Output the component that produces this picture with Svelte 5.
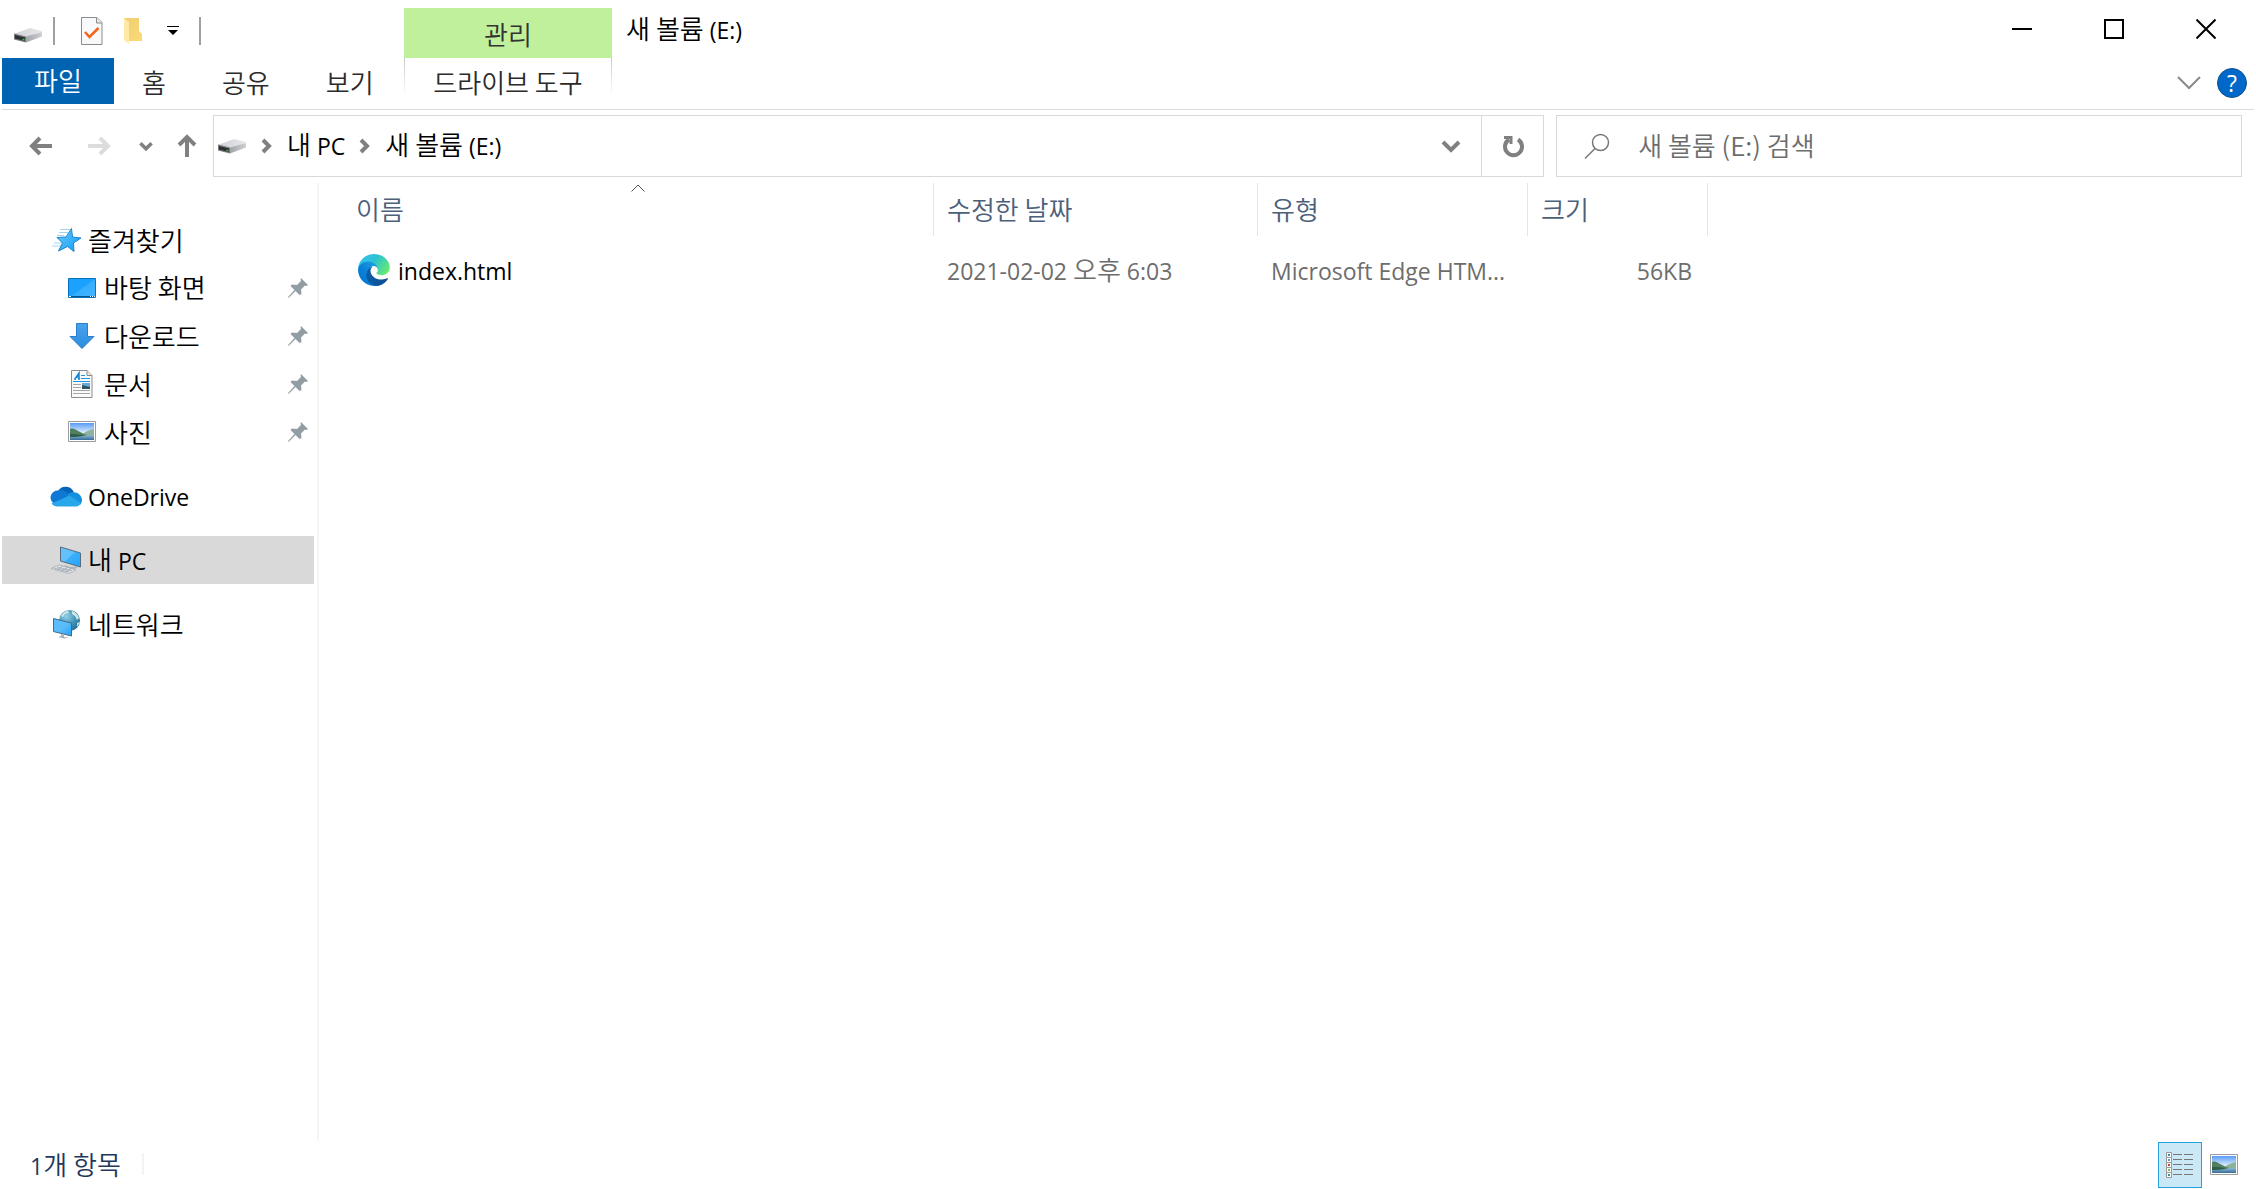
<script lang="ts">
  interface Place {
    label: string;
    icon: string;
    child?: boolean;
    group?: boolean;
    active?: boolean;
  }

  const places: Place[] = [
    {label: '즐겨찾기', icon: 'star'},
    {label: '바탕 화면', icon: 'desktop', child: true},
    {label: '다운로드', icon: 'download', child: true},
    {label: '문서', icon: 'document', child: true},
    {label: '사진', icon: 'picture', child: true},
    {label: 'OneDrive', icon: 'cloud', group: true},
    {label: '내 PC', icon: 'pc', group: true, active: true},
    {label: '네트워크', icon: 'network', group: true},
  ];
  const tabs = ['홈', '공유', '보기'];
  const crumbs = ['내 PC', '새 볼륨 (E:)'];
  const columns = ['이름', '수정한 날짜', '유형', '크기'];
  const files = [
    {name: 'index.html', date: '2021-02-02 오후 6:03', type: 'Microsoft Edge HTM...', size: '56KB'},
  ];
  const viewRows = [0, 5, 10, 15, 20];
  const viewColors = ['#3b8ea5', '#6c8fc7', '#d5402b', '#8fae4a', '#3b8e8e'];

  let search = $state('');
  let view = $state('details');

  // Hangul and Latin runs are set in different faces.
  const runs = (text: string) => text.match(/[\x20-\x7e]+|[^\x20-\x7e]+/g) ?? [];
</script>

{#snippet mixed(text: string)}
  <span class="mixed">{#each runs(text) as run}<span class:latin={/^[\x20-\x7e]/.test(run)}>{run}</span>{/each}</span>
{/snippet}

{#snippet drive()}
  <svg width="30" height="18" viewBox="0 0 30 18" aria-hidden="true">
    <defs>
      <linearGradient id="drive-top" x1="0" x2="1"><stop offset="0" stop-color="#cfd0d3" /><stop offset="1" stop-color="#e8e9ec" /></linearGradient>
      <linearGradient id="drive-side" x1="0" x2="1"><stop offset="0" stop-color="#a3a4a7" /><stop offset="1" stop-color="#cfd0d3" /></linearGradient>
    </defs>
    <path d="M1 8 17 2l12 3v1L13 11z" fill="url(#drive-top)" />
    <path d="M13 10.500 29 6v4.500L13 16.500z" fill="url(#drive-side)" />
    <path d="M1 7.500 13 10.500v6L1 13.500z" fill="#77797c" />
    <path d="M2 9 12 11.500v3.500L2 12.500z" fill="#2d2f31" />
    <path d="M9.500 12.500l2 .5v1.500l-2-.5z" fill="#35c83c" />
  </svg>
{/snippet}

{#snippet chevron(width: number, color: string, stroke: number)}
  <svg {width} height={width} viewBox="0 0 20 20" fill="none" stroke={color} stroke-width={stroke} aria-hidden="true">
    <path d="M2 6l8 8 8-8" />
  </svg>
{/snippet}

{#snippet crumbArrow()}
  <svg width="12" height="16" viewBox="0 0 12 16" fill="none" stroke="#808080" stroke-width="4" aria-hidden="true">
    <path d="M2 2l6 6-6 6" />
  </svg>
{/snippet}

{#snippet landscape()}
  <svg width="28" height="22" viewBox="0 0 28 22" aria-hidden="true">
    <defs>
      <linearGradient id="sky" x2="0" y2="1"><stop offset="0" stop-color="#5a9bf5" /><stop offset=".6" stop-color="#e3f2fc" /></linearGradient>
      <linearGradient id="lake" x2="0" y2="1"><stop offset="0" stop-color="#8db9d6" /><stop offset="1" stop-color="#376b95" /></linearGradient>
    </defs>
    <path d="M.5.5h27v20H.500z" fill="#fff" stroke="#9b9b9b" />
    <path d="M2 2h24v17H2z" fill="url(#sky)" />
    <path d="M2 14h24v5H2z" fill="url(#lake)" />
    <path d="M15 13c3-3 7-4 11-5v6H13z" fill="#8cb29c" />
    <path d="M2 8c3-1 5 0 8 2 3 1 5 3 9 4-5 2-11 1-17 2z" fill="#4f7f5d" />
    <path d="M2 13c5 0 9 0 14 1.500C11 16 6 16 2 16z" fill="#2e5d4a" />
  </svg>
{/snippet}

{#snippet placeIcon(name: string)}
  {#if name === 'star'}
    <svg width="32" height="28" viewBox="0 0 32 28" aria-hidden="true">
      <defs><linearGradient id="star-fill" x2="1" y2="1"><stop offset="0" stop-color="#6bcbff" /><stop offset="1" stop-color="#129bf5" /></linearGradient></defs>
      <path d="M10 3.500h11M9 6.500h9M4 17h9M2 20h10M7 9.500h7" stroke="#a5d3ef" />
      <path d="M21.500 2.500l1 8.500 8.500 1-7.500 5 .5 8.500-6.500-5-9 4.500 4-8L7 11.500l9-.5z" fill="url(#star-fill)" stroke="#1b86cd" />
    </svg>
  {:else if name === 'desktop'}
    <svg width="28" height="20" viewBox="0 0 28 20" aria-hidden="true">
      <defs><linearGradient id="desk-fill" x2="1" y2="1"><stop offset=".5" stop-color="#1ba1ff" /><stop offset=".52" stop-color="#35adff" /><stop offset="1" stop-color="#45b5ff" /></linearGradient></defs>
      <path d="M.5.5h27v19H.500z" fill="url(#desk-fill)" stroke="#0872bd" />
      <path d="M1 18.500h26" stroke="#07558d" />
      <path d="M1 18.500h2m19 0h1m1 0h1m1 0h1" stroke="#fff" />
    </svg>
  {:else if name === 'download'}
    <svg width="28" height="28" viewBox="0 0 28 28" aria-hidden="true">
      <defs><linearGradient id="down-fill" x2="0" y2="1"><stop offset="0" stop-color="#4aa3ec" /><stop offset="1" stop-color="#2a8de0" /></linearGradient></defs>
      <path d="M8.500 1.500h11v13h6.500L14 26.500 2 14.500h6.500z" fill="url(#down-fill)" stroke="#2b7fc9" />
    </svg>
  {:else if name === 'document'}
    <svg width="22" height="28" viewBox="0 0 22 28" aria-hidden="true">
      <path d="M.5.5H16l5 5v22H.500z" fill="#fafafa" stroke="#8c8c8c" />
      <path d="M16 .5v5h5" fill="#e3e3e3" stroke="#8c8c8c" />
      <path d="M4 9l4-6v6M5.500 7H8M3 9h2m2 0h2" fill="none" stroke="#1786d1" stroke-width="1.500" />
      <path d="M10 5.500h4M10 8.500h9M2 11.500h17" stroke="#1c94e0" />
      <path d="M2 14.500h8M2 17.500h8M2 20.500h17M2 23.500h17" stroke="#a5a5a5" />
      <path d="M11 13h8v6h-8z" fill="#6ea6d5" /><path d="M11 15l4 1 4 1v2h-8z" fill="#2f5560" />
    </svg>
  {:else if name === 'picture'}
    {@render landscape()}
  {:else if name === 'cloud'}
    <svg width="32" height="22" viewBox="0 0 32 22" aria-hidden="true">
      <path d="M8 6a9 9 0 0 1 16 1.500L18 13z" fill="#0364b8" />
      <path d="M8 5.500c3-1 6 0 8 1.500l6 4L5 19A7 7 0 0 1 8 5.500z" fill="#0f78d4" />
      <path d="M18 9c3-2 5-2 7-1.500 5 .5 7 5 7 7.500 0 2-1 4-2 5L18 12z" fill="#1490df" />
      <path d="M19.500 10.500 31 18c-1 2-3 3.500-5 3.500H7c-2 0-4-1-5.500-3z" fill="#28a8ea" />
    </svg>
  {:else if name === 'pc'}
    <svg width="32" height="28" viewBox="0 0 32 28" aria-hidden="true">
      <defs><linearGradient id="pc-fill" x2="1" y2="1"><stop offset=".45" stop-color="#62c1fb" /><stop offset=".5" stop-color="#39b0fb" /><stop offset="1" stop-color="#27a4f7" /></linearGradient></defs>
      <path d="M10.500 1l20 6v14l-20-6z" fill="url(#pc-fill)" stroke="#576b7c" />
      <path d="M15 19.500l5 2 7-.5-3 2-8-1.500z" fill="#bac2ca" stroke="#8d98a3" stroke-width=".5" />
      <path d="M1 22.500l8-3.500 17 5-7 3.500z" fill="#e4e7ea" stroke="#9da5ad" stroke-width=".7" />
      <path d="M4 22l15 4M7 21l15 4M7 24l6-4M11 25l6-3M15 26l6-3" stroke="#9ba4ad" stroke-width=".8" />
    </svg>
  {:else}
    <svg width="28" height="30" viewBox="0 0 28 30" aria-hidden="true">
      <defs>
        <radialGradient id="globe" cx=".35" cy=".3" r=".8"><stop offset="0" stop-color="#8fd0e8" /><stop offset=".6" stop-color="#3f8eb3" /><stop offset="1" stop-color="#276b90" /></radialGradient>
        <linearGradient id="net-fill" x2="1" y2="1"><stop offset=".5" stop-color="#5bbdfb" /><stop offset="1" stop-color="#24a3f7" /></linearGradient>
      </defs>
      <circle cx="17.500" cy="11.500" r="10.500" fill="url(#globe)" />
      <path d="M9 7c2-3 4-5 7-5l1 2-4 1-2 3zM20 2c4 1 6 4 7 7l-2 2-2-4-3-2zM25 14l3-1-3 5z" fill="#cfe5df" />
      <path d="M1.500 9.500l18 4.500v13l-18-4.500z" fill="url(#net-fill)" stroke="#456985" />
      <path d="M9 25l3 1v2l5 .5-5 1-6-1.500 3-1z" fill="#aab3bd" />
    </svg>
  {/if}
{/snippet}

<div class="window">
  <header class="titlebar">
    <div class="quick">
      <span class="quick-drive">{@render drive()}</span>
      <i class="bar"></i>
      <button class="quick-check" aria-label="속성">
        <svg width="22" height="28" viewBox="0 0 22 28">
          <path d="M.5.5H16l5 5v22H.500z" fill="#f8f9fb" stroke="#8a8a8a" />
          <path d="M15.500.5v5.500H21" fill="#e8e8e8" stroke="#8a8a8a" />
          <path d="M4 15l4.500 5L17.500 11" fill="none" stroke="#f26418" stroke-width="2.500" />
        </svg>
      </button>
      <button class="quick-folder" aria-label="새 폴더">
        <svg width="20" height="28" viewBox="0 0 20 28">
          <defs><linearGradient id="folder" x2="1" y2="1"><stop offset="0" stop-color="#f0cf74" /><stop offset="1" stop-color="#fbd976" /></linearGradient></defs>
          <path d="M1 1h15v13l3 3v7H2z" fill="url(#folder)" />
          <path d="M1 1l5 4v22l-5-4z" fill="#ffe9a6" />
        </svg>
      </button>
      <button class="quick-more" aria-label="빠른 실행 도구 모음 사용자 지정">
        <svg width="12" height="10" viewBox="0 0 12 10"><path d="M0 0h12v1H0zM1 4h10L6 9z" /></svg>
      </button>
      <i class="bar"></i>
    </div>
    <div class="context-title">관리</div>
    <h1>{@render mixed('새 볼륨 (E:)')}</h1>
    <div class="controls">
      <button aria-label="최소화"><svg width="20" height="20" viewBox="0 0 20 20"><path d="M0 10h20" /></svg></button>
      <button aria-label="최대화"><svg width="20" height="20" viewBox="0 0 20 20"><path d="M1 1h18v18H1z" /></svg></button>
      <button aria-label="닫기"><svg width="20" height="20" viewBox="0 0 20 20"><path d="M.5.5l19 19M19.500.5l-19 19" /></svg></button>
    </div>
  </header>

  <nav class="ribbon" aria-label="리본">
    <div class="tabs">
      <button class="file">파일</button>
      {#each tabs as tab}
        <button>{tab}</button>
      {/each}
    </div>
    <button class="context-tab">드라이브 도구</button>
    <div class="ribbon-end">
      <button aria-label="리본 확장">
        <svg width="24" height="14" viewBox="0 0 24 14" fill="none" stroke="#8a8a8a" stroke-width="2"><path d="M1 1l11 11L23 1" /></svg>
      </button>
      <button class="help" aria-label="도움말">?</button>
    </div>
  </nav>

  <div class="toolbar">
    <div class="history">
      <button aria-label="뒤로">
        <svg width="24" height="20" viewBox="0 0 24 20" fill="none" stroke="#808080" stroke-width="4"><path d="M23 10H4M11 2l-8 8 8 8" /></svg>
      </button>
      <button aria-label="앞으로">
        <svg width="24" height="20" viewBox="0 0 24 20" fill="none" stroke="#dcdcdc" stroke-width="4"><path d="M1 10h19M13 2l8 8-8 8" /></svg>
      </button>
      <button aria-label="최근 위치">{@render chevron(14, '#808080', 5)}</button>
      <button aria-label="위로">
        <svg width="20" height="24" viewBox="0 0 20 24" fill="none" stroke="#808080" stroke-width="4"><path d="M10 23V4M2 11l8-8 8 8" /></svg>
      </button>
    </div>
    <div class="address">
      {@render drive()}
      {#each crumbs as crumb}
        {@render crumbArrow()}
        <a href="#top">{@render mixed(crumb)}</a>
      {/each}
      <button class="drop" aria-label="이전 위치">{@render chevron(20, '#808080', 4)}</button>
      <button class="refresh" aria-label="새로 고침">
        <svg width="22" height="24" viewBox="0 0 22 24" fill="none" stroke="#808080" stroke-width="4">
          <path d="M16 5.500a8.500 8.500 0 1 1-9 0" /><path d="M2 3.500h7V10" stroke-width="3" />
        </svg>
      </button>
    </div>
    <label class="search">
      <svg width="26" height="26" viewBox="0 0 26 26" fill="none" stroke="#777" stroke-width="1.500" aria-hidden="true">
        <circle cx="16.500" cy="9.500" r="8" /><path d="M11 15.500L1 25.500" />
      </svg>
      <input type="text" aria-label="검색" placeholder="새 볼륨 (E:) 검색" bind:value={search} />
    </label>
  </div>

  <div class="body">
    <nav class="sidebar" aria-label="탐색">
      {#each places as place}
        <a href="#top" class:child={place.child} class:group={place.group} class:active={place.active}>
          <span class="icon">{@render placeIcon(place.icon)}</span>
          {@render mixed(place.label)}
          {#if place.child}
            <svg class="pin" width="20" height="20" viewBox="0 0 20 20" aria-hidden="true">
              <path d="M13 0l7 7-1.500 1-1.500-.5-4 4 .5 4.500-2 1-4-4L1 19.500 0 20l.5-1.500L6.500 12l-4-4L4 6.500l5 .5 4-4-.5-2z" fill="#929da3" />
            </svg>
          {/if}
        </a>
      {/each}
    </nav>

    <main>
      <table>
        <colgroup><col class="c-name" /><col class="c-date" /><col class="c-type" /><col class="c-size" /></colgroup>
        <thead>
          <tr>
            {#each columns as column, i}
              <th scope="col">
                {column}
                {#if i === 0}
                  <svg class="sort" width="14" height="8" viewBox="0 0 14 8" fill="none" stroke="#555" aria-hidden="true"><path d="M.5 7.500L7 1l6.500 6.500" /></svg>
                {/if}
              </th>
            {/each}
          </tr>
        </thead>
        <tbody>
          {#each files as file}
            <tr>
              <td>
                <a class="name" href="#top">
                  <svg width="32" height="32" viewBox="0 0 258 258" aria-hidden="true">
                    <defs>
                      <linearGradient id="edge-a" x1=".3" x2="1" y1=".6" y2=".6"><stop offset="0" stop-color="#0c59a4" /><stop offset="1" stop-color="#114a8b" /></linearGradient>
                      <linearGradient id="edge-b" x1=".9" x2=".3" y1=".2" y2="1"><stop offset="0" stop-color="#1b9de2" /><stop offset=".5" stop-color="#0b81d8" /><stop offset="1" stop-color="#0078d4" /></linearGradient>
                      <linearGradient id="edge-c" x1="0" x2="1" y1=".2" y2=".7"><stop offset="0" stop-color="#35c1f1" /><stop offset=".45" stop-color="#2bc3d2" /><stop offset="1" stop-color="#66eb6e" /></linearGradient>
                    </defs>
                    <path d="M235.700 195.500a94 94 0 0 1-10.500 4.700 102 102 0 0 1-36 6.400c-47.300 0-88.500-32.500-88.500-74.300A31.500 31.500 0 0 1 117.100 105c-42.800 1.800-53.800 46.400-53.800 72.500 0 73.900 68.100 81.400 82.800 81.400 7.900 0 19.800-2.300 27-4.600l1.300-.4a128.300 128.300 0 0 0 66.600-52.800 4 4 0 0 0-5.300-5.600z" fill="url(#edge-a)" />
                    <path d="M105.700 241.400A79.200 79.200 0 0 1 83 220.100a80.700 80.700 0 0 1 29.500-120.200c3.100-1.500 8.400-4.100 15.500-4a32.400 32.400 0 0 1 25.700 13 31.900 31.900 0 0 1 6.400 18.700c0-.2 24.500-79.600-80-79.600-43.900 0-80 41.700-80 78.200a130.200 130.200 0 0 0 12.100 56 128 128 0 0 0 156.400 67.100 75.600 75.600 0 0 1-62.800-8z" fill="url(#edge-b)" />
                    <path d="M152.300 148.900c-.8 1-3.300 2.500-3.300 5.600 0 2.600 1.700 5.100 4.700 7.200 14.400 10 41.500 8.700 41.600 8.700a59.600 59.600 0 0 0 30.300-8.300 61.400 61.400 0 0 0 30.400-52.900c.3-22.400-8-37.300-11.300-43.900C223.500 23.900 177.700 0 128 0A128 128 0 0 0 0 126.200c.5-36.500 36.800-66 80-66 3.500 0 23.500.3 42 10 16.300 8.600 24.900 18.900 30.800 29.200 6.200 10.700 7.300 24.200 7.300 29.500s-2.700 13.400-7.800 20z" fill="url(#edge-c)" />
                  </svg>
                  {@render mixed(file.name)}
                </a>
              </td>
              <td>{@render mixed(file.date)}</td>
              <td>{@render mixed(file.type)}</td>
              <td class="size">{@render mixed(file.size)}</td>
            </tr>
          {/each}
        </tbody>
      </table>
    </main>
  </div>

  <footer>
    <span class="count">{@render mixed('1개 항목')}</span>
    <div class="views">
      <button class:on={view === 'details'} aria-label="자세히" onclick={() => (view = 'details')}>
        <svg width="28" height="28" viewBox="0 0 28 28">
          {#each viewRows as y, i}
            <path d="M.5 {y + 1.5}h5v5h-5z" fill="#fff" stroke="#999" />
            <path d="M2 {y + 3}h2v2H2z" fill={viewColors[i]} />
            <path d="M7 {y + 3.5}h9m2 0h9" stroke="#777" />
          {/each}
        </svg>
      </button>
      <button class:on={view === 'large'} aria-label="큰 아이콘" onclick={() => (view = 'large')}>{@render landscape()}</button>
    </div>
  </footer>
</div>

<style>
  :global(body) {
    margin: 0;
    background: #fff;
  }
  .window {
    display: flex;
    flex-direction: column;
    box-sizing: border-box;
    min-height: 100vh;
    padding: 0 2px;
    font: 350 26px/36px "Noto Sans CJK KR", "Open Sans", sans-serif;
    color: #000;
  }
  .window * { box-sizing: border-box; }
  svg { display: block; flex: none; }
  button {
    display: flex;
    align-items: center;
    justify-content: center;
    margin: 0;
    padding: 0;
    border: 0;
    background: none;
    color: inherit;
    font: inherit;
  }
  a { color: inherit; text-decoration: none; }
  .mixed { white-space: pre; }
  .latin { font-family: "Open Sans", sans-serif; font-size: 23px; font-weight: 400; }

  .titlebar { display: flex; height: 58px; }
  .quick { display: flex; align-items: center; width: 402px; padding: 4px 0 0 11px; }
  .quick-drive { margin-right: 10px; padding-top: 8px; }
  .bar { width: 2px; height: 28px; background: #a0a0a0; }
  .quick-check { margin-left: 26px; }
  .quick-folder { margin-left: 20px; }
  .quick-more { margin: 0 20px 0 24px; }
  .context-title {
    width: 208px;
    margin-top: 8px;
    background: #c0f09c;
    color: #333;
    line-height: 52px;
    text-align: center;
  }
  h1 { margin: 0 0 0 14px; font: inherit; line-height: 56px; }
  .controls { display: flex; margin-left: auto; padding-right: 2px; }
  .controls button { width: 92px; }
  .controls svg { fill: none; stroke: #000; stroke-width: 2; }

  .ribbon {
    display: flex;
    height: 52px;
    border-bottom: 1px solid #dadbdc;
    color: #2b2b2b;
  }
  .tabs { display: flex; width: 402px; }
  .tabs button { height: 48px; padding: 0 28px; }
  .tabs .file {
    width: 112px;
    height: 46px;
    padding-bottom: 2px;
    background: #0063b1;
    color: #fff;
  }
  .context-tab {
    width: 208px;
    height: 48px;
    background:
      linear-gradient(#c8c8c8, #fff) 0 0 / 1px 38px no-repeat,
      linear-gradient(#c8c8c8, #fff) 100% 0 / 1px 38px no-repeat;
  }
  .ribbon-end { display: flex; align-items: center; gap: 16px; height: 50px; margin-left: auto; padding-right: 7px; }
  .help {
    width: 30px;
    height: 30px;
    border: 1px solid #14508c;
    border-radius: 50%;
    background: #0068c9;
    color: #fff;
    font: 400 23px/28px "Open Sans", sans-serif;
  }

  .toolbar {
    display: grid;
    grid-template-columns: 199px 33fr 17fr;
    column-gap: 12px;
    height: 73px;
    padding: 5px 12px 6px 0;
  }
  .history { display: flex; align-items: center; gap: 28px; padding-left: 27px; }
  .history button:nth-child(2) { margin-left: 6px; }
  .history button:nth-child(4) { margin-left: -4px; }
  .address, .search { display: flex; align-items: center; border: 1px solid #d9d9d9; }
  .address { padding-left: 3px; gap: 14px; }
  .address > a { padding-bottom: 2px; }
  .drop { margin-left: auto; margin-right: 6px; }
  .refresh { align-self: stretch; width: 62px; border-left: 1px solid #d9d9d9; }
  .search { padding: 0 27px; gap: 28px; }
  .search input {
    flex: 1;
    min-width: 0;
    padding: 0 0 2px;
    border: 0;
    outline: 0;
    background: none;
    font: inherit;
  }
  .search input::placeholder { color: #6d6d6d; opacity: 1; }

  .body { display: flex; flex: 1; }
  .sidebar {
    flex: none;
    width: 317px;
    padding: 33px 3px 0 0;
    border-right: 2px solid #f5f5f5;
  }
  .sidebar a { display: flex; align-items: center; gap: 6px; height: 48px; padding: 0 6px 0 48px; }
  .sidebar .child { padding-left: 64px; }
  .sidebar .group { margin-top: 16px; }
  .sidebar .active { background: #d9d9d9; }
  .icon { display: flex; justify-content: center; width: 32px; }
  .pin { margin-left: auto; }

  main { flex: 1; min-width: 0; padding-left: 24px; }
  table { table-layout: fixed; width: 1365px; border-collapse: separate; border-spacing: 0; }
  .c-name { width: 591px; }
  .c-date { width: 324px; }
  .c-type { width: 270px; }
  .c-size { width: 180px; }
  th {
    position: relative;
    height: 53px;
    padding: 0 0 2px 13px;
    border-right: 1px solid #e5e5e5;
    color: #4c607a;
    font-weight: inherit;
    text-align: left;
  }
  .sort { position: absolute; top: 1px; left: 50%; transform: translateX(-50%); }
  td { height: 68px; padding: 0 16px 0 13px; color: #6d6d6d; white-space: nowrap; }
  td:first-child { padding-left: 15px; color: #000; }
  .name { display: flex; align-items: center; gap: 8px; }
  .size { text-align: right; }

  footer { display: flex; align-items: center; height: 48px; padding-bottom: 1px; color: #1e395b; }
  .count { position: relative; margin-left: 28px; padding-right: 23px; }
  .count::after {
    content: "";
    position: absolute;
    top: 7px;
    right: 0;
    width: 2px;
    height: 22px;
    background: #f3f3f3;
  }
  .views { display: flex; margin-left: auto; padding-right: 8px; }
  .views button { width: 44px; height: 46px; border: 1px solid transparent; }
  .views .on { border-color: #26a0da; background: #cbe8f6; }
</style>
